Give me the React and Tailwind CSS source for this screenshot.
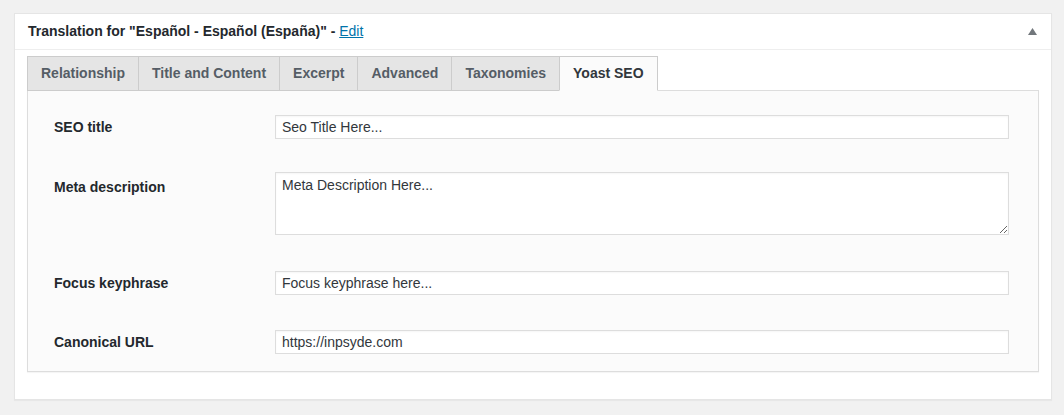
import { useState } from 'react';

const tabs = ['Relationship', 'Title and Content', 'Excerpt', 'Advanced', 'Taxonomies', 'Yoast SEO'];

const Field = ({ label, value }) => (
  <div className="flex items-center">
    <label className="w-[221px] shrink-0 text-[14px] font-semibold text-[#23282d]">{label}</label>
    <input
      readOnly
      value={value}
      className="h-[24px] flex-1 border border-[#ddd] bg-white px-[6px] text-[14px] text-[#32373c] shadow-[inset_0_1px_2px_rgba(0,0,0,0.04)] outline-none"
    />
  </div>
);

const App = () => {
  const [active, setActive] = useState('Yoast SEO');

  return (
    <div className="min-h-[415px] bg-[#f1f1f1] pl-[14px] pr-[12px] pt-[13px] font-['Liberation_Sans',Arial,sans-serif]">
      <div className="border border-[#e5e5e5] bg-white shadow-[0_1px_1px_rgba(0,0,0,0.04)]">
        {/* header */}
        <div className="flex h-[36px] items-center justify-between border-b border-[#eee] pl-[13px] pr-[14px]">
          <h2 className="text-[14px] font-semibold text-[#23282d]">
            Translation for "Español - Español (España)" -{' '}
            <a href="#" className="font-normal text-[#0073aa] underline">Edit</a>
          </h2>
          <svg width="9" height="7" viewBox="0 0 9 7" className="mb-[1px]">
            <polygon points="4.5,0 9,7 0,7" fill="#72777c" />
          </svg>
        </div>

        <div className="px-[12px] pt-[6px] pb-[27px]">
          {/* tabs */}
          <div className="relative z-10 flex">
            {tabs.map((t, i) => (
              <button
                key={t}
                onClick={() => setActive(t)}
                className={`-mb-px h-[35px] border border-[#ccc] px-[13px] text-[14px] font-semibold ${i > 0 ? '-ml-px' : ''} ${
                  active === t ? 'border-b-[#fbfbfb] bg-[#fbfbfb] text-[#32373c]' : 'bg-[#e5e5e5] text-[#555d66]'
                }`}
              >
                {t}
              </button>
            ))}
          </div>

          {/* panel */}
          <div className="border border-[#ddd] bg-[#fbfbfb] pl-[26px] pr-[29px] pt-[24px] pb-[17px] shadow-[0_1px_1px_rgba(0,0,0,0.04)]">
            <Field label="SEO title" value="Seo Title Here..." />

            <div className="mt-[33px] flex items-start">
              <label className="mt-[5px] w-[221px] shrink-0 text-[14px] font-semibold text-[#23282d]">Meta description</label>
              <textarea
                readOnly
                value="Meta Description Here..."
                className="h-[63px] flex-1 border border-[#ddd] bg-white px-[6px] pt-[2px] text-[14px] text-[#32373c] shadow-[inset_0_1px_2px_rgba(0,0,0,0.04)] outline-none"
              />
            </div>

            <div className="mt-[36px]">
              <Field label="Focus keyphrase" value="Focus keyphrase here..." />
            </div>
            <div className="mt-[35px]">
              <Field label="Canonical URL" value="https://inpsyde.com" />
            </div>
          </div>
        </div>
      </div>
    </div>
  );
};

export default App;
